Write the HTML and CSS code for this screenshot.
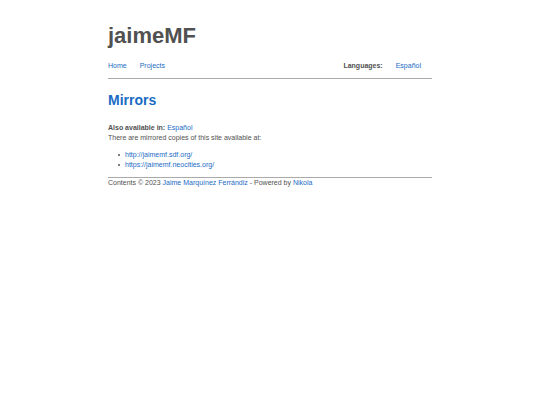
FILE: index.html
```html
<!DOCTYPE html>
<html lang="en">
<head>
<meta charset="utf-8">
<title>Mirrors | jaimeMF</title>
<link rel="stylesheet" href="styles.css">
</head>
<body>
<div class="container">
<header>
<h1 class="site-title">jaimeMF</h1>
<nav class="menu">
<a href="#">Home</a>
<a href="#">Projects</a>
<strong class="languages">Languages:</strong>
<a href="#">Español</a>
</nav>
</header>
<main>
<h2><a href="#">Mirrors</a></h2>
<div><strong>Also available in:</strong> <a href="#">Español</a></div>
<p>There are mirrored copies of this site available at:</p>
<ul>
<li><a href="#">http://jaimemf.sdf.org/</a></li>
<li><a href="#">https://jaimemf.neocities.org/</a></li>
</ul>
</main>
<footer>Contents © 2023 <a href="#">Jaime Marquínez Ferrándiz</a> - Powered by <a href="#">Nikola</a></footer>
</div>
</body>
</html>
```
FILE: styles.css
```css
body {
  margin: 0;
  background: #fff;
  color: #515151;
  font: 7px/10px "Liberation Sans", Arial, sans-serif;
}
.container {
  width: 60%;
  margin: 0 auto;
  padding-top: 22px;
}
a {
  color: #1a6bc4;
  text-decoration: none;
}
.site-title {
  margin: 0;
  font-size: 22px;
  line-height: 28px;
}
.menu {
  display: flex;
  gap: 13px;
  padding: 11px 11px 7px 0;
  border-bottom: 1px solid #aaa;
}
.languages {
  margin-left: auto;
}
h2 {
  margin: 11px 0 13px;
  font-size: 14px;
  line-height: 20px;
}
p {
  margin: 0;
}
ul {
  margin: 7px 0;
  padding-left: 10px;
  list-style: none;
}
li {
  display: flex;
  align-items: center;
  gap: 5px;
}
li::before {
  content: "";
  width: 2px;
  height: 2px;
  border-radius: 1px;
  background: #515151;
}
footer {
  border-top: 1px solid #aaa;
}
```
